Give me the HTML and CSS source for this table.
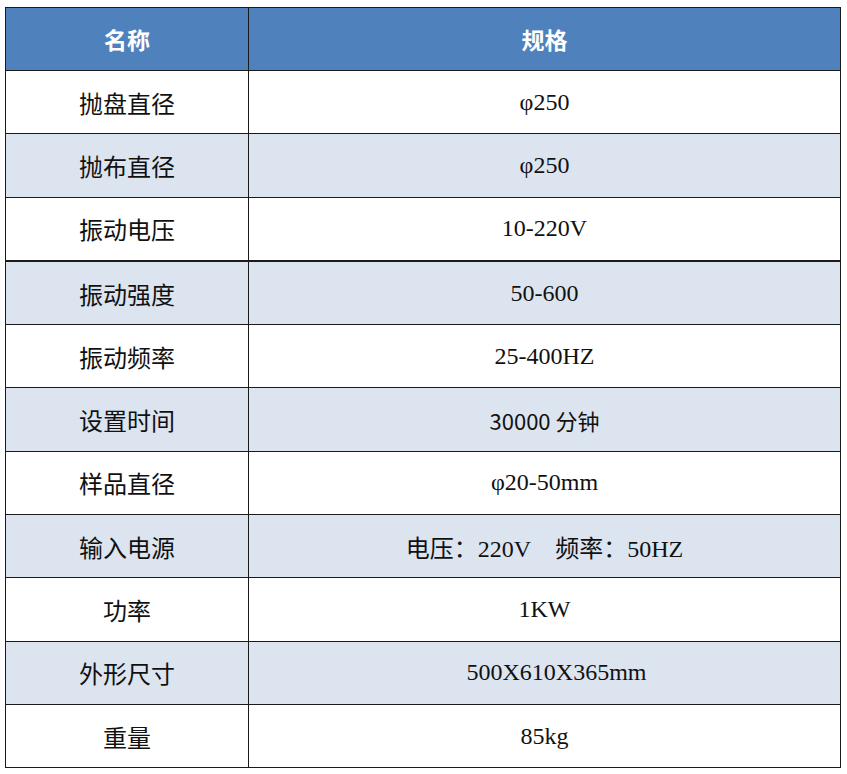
FILE: index.html
```html
<!DOCTYPE html>
<html lang="zh">
<head>
<meta charset="utf-8">
<link rel="stylesheet" href="styles.css">
</head>
<body>
<table class="spec">
  <thead>
    <tr><th class="name">名称</th><th>规格</th></tr>
  </thead>
  <tbody>
    <tr><td class="name">抛盘直径</td><td>φ250</td></tr>
    <tr class="alt"><td class="name">抛布直径</td><td>φ250</td></tr>
    <tr><td class="name">振动电压</td><td>10-220V</td></tr>
    <tr class="alt thick"><td class="name">振动强度</td><td>50-600</td></tr>
    <tr><td class="name">振动频率</td><td>25-400HZ</td></tr>
    <tr class="alt"><td class="name">设置时间</td><td class="sans">30000 分钟</td></tr>
    <tr><td class="name">样品直径</td><td>φ20-50mm</td></tr>
    <tr class="alt"><td class="name">输入电源</td><td>电压：220V&nbsp;&nbsp;&nbsp;&nbsp;频率：50HZ</td></tr>
    <tr><td class="name">功率</td><td>1KW</td></tr>
    <tr class="alt"><td class="name">外形尺寸</td><td class="shift">500X610X365mm</td></tr>
    <tr><td class="name">重量</td><td>85kg</td></tr>
  </tbody>
</table>
</body>
</html>
```

FILE: styles.css
```css
html, body {
  margin: 0;
  padding: 0;
  background: #ffffff;
}

body {
  padding: 7px 0 0 5px;
}

.spec {
  border-collapse: collapse;
  width: 836px;
  table-layout: fixed;
  color: #111111;
}

.spec th,
.spec td {
  border: 1.5px solid #1a1a1a;
  text-align: center;
  vertical-align: middle;
  padding: 0;
}

.spec th {
  background: #4f81bd;
  color: #ffffff;
  font-family: "Noto Sans CJK SC", sans-serif;
  font-weight: 700;
  font-size: 23px;
  height: 62px;
}

.spec th.name,
.spec td.name {
  width: 242px;
}

.spec td {
  height: 62.3px;
  font-family: "Liberation Serif", "Noto Sans CJK SC", serif;
  font-size: 24px;
}

.spec td.name {
  font-family: "Noto Sans CJK SC", sans-serif;
  font-size: 24px;
}

.spec td.sans {
  font-family: "Noto Sans CJK SC", sans-serif;
  font-size: 22px;
}

.spec td.shift {
  padding-left: 24px;
}

.spec tr.alt td {
  background: #dce4f0;
}

.spec tr.thick td {
  border-top-width: 2px;
}
```
